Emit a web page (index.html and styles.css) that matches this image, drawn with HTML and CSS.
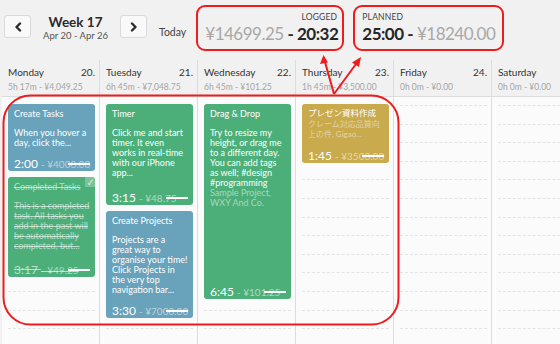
FILE: index.html
```html
<!DOCTYPE html>
<html>
<head>
<meta charset="utf-8">
<link rel="stylesheet" href="styles.css">
</head>
<body>
<div class="page">
  <header class="toolbar">
    <button class="nav-btn"><svg width="8" height="10" viewBox="0 0 8 10"><polyline points="6,1.5 2.5,5 6,8.5" fill="none" stroke="#2b2b2b" stroke-width="2.4" stroke-linecap="round" stroke-linejoin="round"/></svg></button>
    <div class="week">
      <div class="week-title">Week 17</div>
      <div class="week-range">Apr 20 - Apr 26</div>
    </div>
    <button class="nav-btn"><svg width="8" height="10" viewBox="0 0 8 10"><polyline points="2,1.5 5.5,5 2,8.5" fill="none" stroke="#2b2b2b" stroke-width="2.4" stroke-linecap="round" stroke-linejoin="round"/></svg></button>
    <span class="today">Today</span>
    <div class="summary logged">
      <div class="summary-label">LOGGED</div>
      <div class="summary-value"><span class="money">¥14699.25</span> <span class="strong">- 20:32</span></div>
    </div>
    <div class="summary planned">
      <div class="summary-label">PLANNED</div>
      <div class="summary-value"><span class="strong">25:00 -</span> <span class="money">¥18240.00</span></div>
    </div>
  </header>

  <div class="calendar">
    <div class="day">
      <div class="day-head">
        <div class="day-row"><span>Monday</span><span>20.</span></div>
        <div class="day-total">5h 17m - ¥4,049.25</div>
      </div>
      <div class="day-body">
        <div class="slots"><i></i><i></i><i></i><i></i><i></i><i></i><i></i><i></i><i></i><i></i><i></i><i></i><i></i></div>
        <div class="events">
          <div class="event blue" style="height:67px">
            <div class="event-title">Create Tasks</div>
            <div class="event-desc">When you hover a day, click the...</div>
            <div class="event-time">2:00 <span class="price">- ¥4000.00</span></div>
          </div>
          <div class="event green done" style="height:100px">
            <span class="check">✓</span>
            <div class="event-title">Completed Tasks</div>
            <div class="event-desc">This is a completed task. All tasks you add in the past will be automatically completed, but...</div>
            <div class="event-time">3:17 <span class="price">- ¥49.25</span></div>
          </div>
        </div>
      </div>
    </div>

    <div class="day">
      <div class="day-head">
        <div class="day-row"><span>Tuesday</span><span>21.</span></div>
        <div class="day-total">6h 45m - ¥7,048.75</div>
      </div>
      <div class="day-body">
        <div class="slots"><i></i><i></i><i></i><i></i><i></i><i></i><i></i><i></i><i></i><i></i><i></i><i></i><i></i></div>
        <div class="events">
          <div class="event green" style="height:101px">
            <div class="event-title">Timer</div>
            <div class="event-desc">Click me and start timer. It even works in real-time with our iPhone app...</div>
            <div class="event-time">3:15 <span class="price">- ¥48.75</span></div>
          </div>
          <div class="event blue" style="height:107px">
            <div class="event-title">Create Projects</div>
            <div class="event-desc">Projects are a<br>great way to<br>organise your time!<br>Click Projects in<br>the very top<br>navigation bar...</div>
            <div class="event-time">3:30 <span class="price">- ¥7000.00</span></div>
          </div>
        </div>
      </div>
    </div>

    <div class="day">
      <div class="day-head">
        <div class="day-row"><span>Wednesday</span><span>22.</span></div>
        <div class="day-total">6h 45m - ¥101.25</div>
      </div>
      <div class="day-body">
        <div class="slots"><i></i><i></i><i></i><i></i><i></i><i></i><i></i><i></i><i></i><i></i><i></i><i></i><i></i></div>
        <div class="events">
          <div class="event green" style="height:195px">
            <div class="event-title">Drag &amp; Drop</div>
            <div class="event-desc">Try to resize my height, or drag me to a different day. You can add tags as well; #design #programming</div>
            <div class="event-meta">Sample Project, WXY And Co.</div>
            <div class="event-time">6:45 <span class="price">- ¥101.25</span></div>
          </div>
        </div>
      </div>
    </div>

    <div class="day">
      <div class="day-head">
        <div class="day-row"><span>Thursday</span><span>23.</span></div>
        <div class="day-total">1h 45m - ¥3,500.00</div>
      </div>
      <div class="day-body">
        <div class="slots"><i></i><i></i><i></i><i></i><i></i><i></i><i></i><i></i><i></i><i></i><i></i><i></i><i></i></div>
        <div class="events">
          <div class="event gold" style="height:59px">
            <div class="event-title jp">プレゼン資料作成</div>
            <div class="event-meta jp">クレーム対応品質向上の件, Gigao...</div>
            <div class="event-time">1:45 <span class="price">- ¥3500.00</span></div>
          </div>
        </div>
      </div>
    </div>

    <div class="day">
      <div class="day-head">
        <div class="day-row"><span>Friday</span><span>24.</span></div>
        <div class="day-total">0h 0m - ¥0.00</div>
      </div>
      <div class="day-body">
        <div class="slots"><i></i><i></i><i></i><i></i><i></i><i></i><i></i><i></i><i></i><i></i><i></i><i></i><i></i></div>
      </div>
    </div>

    <div class="day last">
      <div class="day-head">
        <div class="day-row"><span>Saturday</span></div>
        <div class="day-total">0h 0m - ¥0.00</div>
      </div>
      <div class="day-body">
        <div class="slots"><i></i><i></i><i></i><i></i><i></i><i></i><i></i><i></i><i></i><i></i><i></i><i></i><i></i></div>
      </div>
    </div>
  </div>

  <svg class="annotations" width="560" height="344" viewBox="0 0 560 344">
    <rect x="3.5" y="95.5" width="395" height="229" rx="27" fill="none" stroke="#ee1c1c" stroke-width="2"/>
    <line x1="334" y1="94" x2="325" y2="62" stroke="#ee1c1c" stroke-width="2"/>
    <polygon points="323.5,55 320,64 328,62.5" fill="#ee1c1c"/>
    <line x1="334" y1="94" x2="356" y2="64" stroke="#ee1c1c" stroke-width="2"/>
    <polygon points="361,57 352,62.5 359,67" fill="#ee1c1c"/>
  </svg>
</div>
</body>
</html>
```

FILE: styles.css
```css
* {
  box-sizing: border-box;
  margin: 0;
  padding: 0;
}

body {
  margin: 0;
  background: #f1f1f1;
  font-family: Lato, "Noto Sans CJK JP", sans-serif;
  color: #333;
}

.page {
  position: relative;
  width: 560px;
  height: 344px;
  overflow: hidden;
}

/* toolbar */
.toolbar {
  display: flex;
  align-items: flex-start;
  height: 60px;
  padding: 5px 0 0 4px;
}

.nav-btn {
  width: 27px;
  height: 23px;
  margin-top: 10px;
  border: 1px solid #d9d9d9;
  border-radius: 3px;
  background: #f9f9f9;
  display: flex;
  align-items: center;
  justify-content: center;
}

.week {
  width: 89px;
  text-align: center;
  margin-top: 10px;
}

.week-title {
  font-size: 13.5px;
  font-weight: 700;
  line-height: 15px;
  color: #2a2a2a;
}

.week-range {
  font-size: 9.5px;
  line-height: 12px;
  color: #555;
}

.today {
  margin: 21px 0 0 12px;
  font-size: 10.5px;
  color: #444;
}

.summary {
  height: 46px;
  border: 2px solid #ee1c1c;
  border-radius: 9px;
  padding: 4px 5px 0 7px;
}

.logged {
  margin-left: 10px;
  width: 148px;
  text-align: right;
}

.planned {
  margin-left: 9px;
  width: 151px;
}

.summary-label {
  font-size: 8.5px;
  line-height: 12px;
  color: #444;
  letter-spacing: 0.2px;
}

.summary-value {
  font-size: 17px;
  line-height: 22px;
  letter-spacing: -0.5px;
  white-space: nowrap;
}

.money {
  color: #a8a8a8;
  font-weight: 400;
}

.strong {
  font-weight: 700;
  color: #262626;
}

/* calendar */
.calendar {
  display: grid;
  grid-template-columns: repeat(6, 98px) 1fr;
  margin-left: 2px;
  height: 284px;
}

.day {
  border-right: 1px solid #dcdcdc;
  display: flex;
  flex-direction: column;
  min-width: 0;
}

.day-head {
  height: 37px;
  border-bottom: 1px solid #dcdcdc;
  padding: 5px 4px 0 6px;
}

.day-row {
  display: flex;
  justify-content: space-between;
  font-size: 10px;
  line-height: 14px;
  color: #333;
}

.day-total {
  font-size: 8.5px;
  line-height: 14px;
  margin-top: 1px;
  color: #a5a5a5;
}

.day-body {
  flex: 1;
  display: grid;
  background: #fbfbfb;
}

.slots,
.events {
  grid-area: 1 / 1;
}

.slots {
  display: flex;
  flex-direction: column;
  padding: 0 4px 0 6px;
}

.slots i {
  display: block;
  flex: none;
  height: 18.6px;
  border-bottom: 1px dashed #e4e4e4;
}

.slots i:first-child {
  height: 9px;
}

.events {
  display: flex;
  flex-direction: column;
  gap: 6px;
  padding: 7px 4px 0 6px;
}

.event {
  position: relative;
  flex: none;
  display: flex;
  flex-direction: column;
  padding: 4px 5px 0 6px;
  border-radius: 3px;
  color: #fff;
  overflow: hidden;
}

.event::after {
  content: "";
  position: absolute;
  left: 60px;
  bottom: 6px;
  width: 22px;
  height: 2px;
  background: #fff;
}

.blue { background: #68a2bb; }
.green { background: #4caf7a; }
.gold { background: #c9aa4c; }

.event-title {
  font-size: 9px;
  line-height: 12px;
}

.event-desc {
  font-size: 9px;
  line-height: 10px;
  margin-top: 8px;
}

.event-meta {
  font-size: 9px;
  line-height: 10px;
  color: rgba(255, 255, 255, 0.5);
}

.event-title.jp {
  font-size: 8.5px;
  line-height: 11px;
}

.event-meta.jp {
  font-size: 8px;
  line-height: 10px;
}

.event-time {
  margin-top: auto;
  font-size: 12px;
  line-height: 14px;
  white-space: nowrap;
}

.price {
  font-size: 10px;
  color: rgba(255, 255, 255, 0.55);
}

.done .event-title,
.done .event-desc,
.done .event-time {
  text-decoration: line-through;
  color: rgba(255, 255, 255, 0.6);
}

.check {
  position: absolute;
  top: 0;
  right: 0;
  width: 10px;
  height: 10px;
  font-size: 7px;
  line-height: 10px;
  text-align: center;
  background: rgba(255, 255, 255, 0.25);
  color: #fff;
}

.annotations {
  position: absolute;
  top: 0;
  left: 0;
  pointer-events: none;
}
```
